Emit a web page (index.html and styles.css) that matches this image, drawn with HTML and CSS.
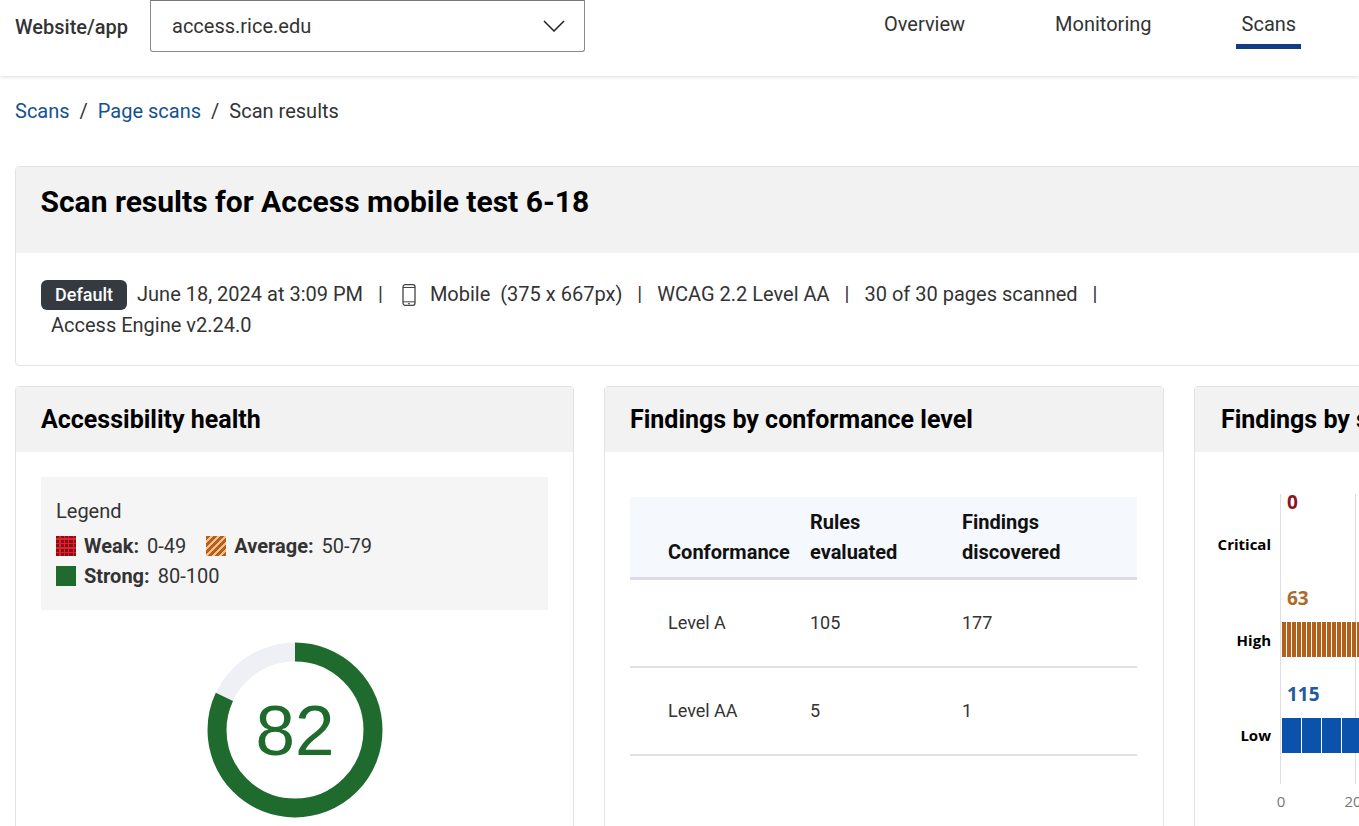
FILE: index.html
```html
<!DOCTYPE html>
<html lang="en">
<head>
<meta charset="utf-8">
<title>Scan results</title>
<link rel="stylesheet" href="styles.css">
</head>
<body>
<header class="topbar">
  <label class="site-label">Website/app</label>
  <div class="select">
    <span>access.rice.edu</span>
    <svg class="chev" width="22" height="12" viewBox="0 0 22 12"><path d="M1 1l10 10L21 1" fill="none" stroke="#222" stroke-width="1.5"/></svg>
  </div>
  <nav class="tabs">
    <a class="tab">Overview</a>
    <a class="tab">Monitoring</a>
    <a class="tab active">Scans</a>
  </nav>
</header>
<main class="page">
  <div class="crumbs"><a>Scans</a><i>/</i><a>Page scans</a><i>/</i><span>Scan results</span></div>
  <section class="summary">
    <h1>Scan results for Access mobile test 6-18</h1>
    <div class="meta">
      <span class="badge">Default</span>
      <span>June 18, 2024 at 3:09 PM</span><i>|</i>
      <svg class="phone" width="14" height="22" viewBox="0 0 14 22"><rect x="1" y="0.7" width="12" height="20.6" rx="2.2" fill="none" stroke="#444" stroke-width="1.3"/><path d="M1 3.5h12M1 17.8h12" stroke="#444" stroke-width="1"/><circle cx="7" cy="19.6" r="0.9" fill="#444"/></svg>
      <span>Mobile&nbsp; (375 x 667px)</span><i>|</i>
      <span>WCAG 2.2 Level AA</span><i>|</i>
      <span>30 of 30 pages scanned</span><i>|</i>
      <span class="engine">Access Engine v2.24.0</span>
    </div>
  </section>
  <div class="cards">
    <section class="card">
      <h2>Accessibility health</h2>
      <div class="card-body">
        <div class="legend">
          <div class="legend-title">Legend</div>
          <div class="legend-row">
            <span class="swatch weak"></span><b>Weak:</b><span class="range">0-49</span>
            <span class="swatch average"></span><b>Average:</b><span class="range">50-79</span>
          </div>
          <div class="legend-row">
            <span class="swatch strong"></span><b>Strong:</b><span class="range">80-100</span>
          </div>
        </div>
        <div class="donut">
          <svg width="176" height="176" viewBox="0 0 176 176">
            <circle cx="88" cy="88" r="78" fill="none" stroke="#eef0f5" stroke-width="19"/>
            <circle cx="88" cy="88" r="78" fill="none" stroke="#1f6b2d" stroke-width="19" pathLength="100" stroke-dasharray="82 18" transform="rotate(-90 88 88)"/>
            <text x="88" y="113" text-anchor="middle" class="score">82</text>
          </svg>
        </div>
      </div>
    </section>
    <section class="card card-wide">
      <h2>Findings by conformance level</h2>
      <div class="card-body">
        <table class="conf">
          <thead><tr><th>Conformance</th><th>Rules<br>evaluated</th><th>Findings<br>discovered</th></tr></thead>
          <tbody>
            <tr><td>Level A</td><td>105</td><td>177</td></tr>
            <tr><td>Level AA</td><td>5</td><td>1</td></tr>
          </tbody>
        </table>
      </div>
    </section>
    <section class="card card-chart">
      <h2>Findings by severity</h2>
      <div class="chart-body">
        <svg class="chart" width="560" height="340" viewBox="0 0 560 340">
          <defs>
            <pattern id="stripes" width="5" height="35" patternUnits="userSpaceOnUse" x="87"><rect width="4" height="35" fill="#b4601a"/></pattern>
            <pattern id="cells" width="20" height="35" patternUnits="userSpaceOnUse" x="87"><rect width="19" height="35" fill="#0b52ad"/></pattern>
          </defs>
          <path d="M85.5 42V332M160.5 42V332" stroke="#dfdfe3"/>
          <rect x="87" y="170" width="270" height="35" fill="url(#stripes)"/>
          <rect x="87" y="266" width="460" height="35" fill="url(#cells)"/>
          <text class="sev" x="76" y="98" text-anchor="end">Critical</text>
          <text class="sev" x="76" y="194" text-anchor="end">High</text>
          <text class="sev" x="76" y="289" text-anchor="end">Low</text>
          <text class="val crit" x="92" y="57">0</text>
          <text class="val high" x="92" y="153">63</text>
          <text class="val low" x="92" y="249">115</text>
          <text class="tick" x="86" y="355" text-anchor="middle">0</text>
          <text class="tick" x="158" y="355" text-anchor="middle">20</text>
        </svg>
      </div>
    </section>
  </div>
</main>
</body>
</html>
```
FILE: styles.css
```css
* { box-sizing: border-box; }
html, body { margin: 0; height: 826px; overflow: hidden; background: #fff; }
body { font-family: Roboto, "Liberation Sans", sans-serif; font-size: 19px; color: #333; width: 1359px; }
.topbar { height: 76px; display: flex; align-items: flex-start; padding-left: 15px; background: #fff; box-shadow: 0 1px 4px rgba(0,0,0,.14); position: relative; }
.site-label { flex: none; font-weight: 500; font-size: 20px; line-height: 24px; margin-top: 15px; width: 135px; }
.select { flex: none; width: 435px; height: 52px; border: 1px solid #8a8a8a; border-top-color: #777; border-radius: 0 0 3px 3px; display: flex; align-items: center; justify-content: space-between; padding: 0 19px 0 21px; font-size: 20px; }
.chev { flex: none; }
.tabs { display: flex; flex: none; margin-left: 299px; }
.tab { font-size: 20px; line-height: 24px; padding: 12px 0 0; height: 49px; margin-right: 90px; white-space: nowrap; }
.tab.active { padding: 12px 5px 0 6px; margin-left: -6px; border-bottom: 5px solid #0f3f80; }
.page { padding: 0 0 0 15px; }
.crumbs { height: 90px; padding-top: 23px; font-size: 20px; line-height: 24px; display: flex; color: #333; }
.crumbs a { color: #14528f; }
.crumbs i { font-style: normal; margin: 0 10px; }
.summary { width: 1400px; height: 200px; border: 1px solid #e3e3e3; border-radius: 4px; }
h1 { margin: 0; height: 86px; background: #f2f2f2; padding: 18px 24.5px 0; font-size: 30px; line-height: 34px; font-weight: 700; color: #000; }
.meta { width: 1100px; padding: 26px 0 0 25px; line-height: 31px; font-size: 20px; display: flex; flex-wrap: wrap; align-items: center; column-gap: 10px; }
.meta i { font-style: normal; margin: 0 5px; }
.meta .engine { margin-left: 10px; }
.badge { background: #343a40; color: #fff; font-weight: 500; font-size: 18px; line-height: 30px; height: 30px; padding: 0 14px; border-radius: 6px; }
.phone { flex: none; margin: 0 4px 0 4px; }
.cards { display: flex; gap: 30px; margin-top: 20px; width: 1800px; }
.card { width: 559px; height: 500px; flex: none; border: 1px solid #e3e3e3; border-radius: 4px; }
.card-wide, .card-chart { width: 560px; }
.card-chart h2 { padding-left: 26px; }
h2 { margin: 0; height: 65px; background: #f2f2f2; padding: 0 25px; font-size: 25px; line-height: 65px; font-weight: 700; color: #000; white-space: nowrap; overflow: hidden; }
.card-body { padding: 25px; }
.legend { height: 133px; background: #f5f5f5; padding: 19px 15px 0; }
.legend-title { line-height: 30px; font-size: 20px; margin-bottom: 5px; }
.legend-row { display: flex; align-items: center; height: 30px; font-size: 20px; }
.legend-row b { font-weight: 700; margin-right: 8px; }
.range { margin-right: 20px; }
.swatch { width: 20px; height: 20px; margin-right: 8px; flex: none; }
.weak { background-color: #8e0d14; background-image: repeating-linear-gradient(0deg, transparent 0 3px, #d9232e 3px 4.5px), repeating-linear-gradient(90deg, transparent 0 3px, #d9232e 3px 4.5px); }
.average { background-color: #f0a868; background-image: repeating-linear-gradient(-45deg, #b4601a 0 3px, #f2c090 3px 5px); }
.strong { background: #1f6b2d; }
.donut { margin-top: 32px; display: flex; justify-content: center; }
.score { font-family: "Liberation Sans", sans-serif; font-size: 71px; fill: #1f6b2d; }
.conf { width: 507px; border-collapse: collapse; table-layout: fixed; margin-top: 20px; font-size: 18px; }
.conf th { background: #f5f8fc; font-size: 20px; font-weight: 700; color: #111; text-align: left; vertical-align: bottom; line-height: 30px; padding: 10px 0; border-bottom: 3px solid #dcdce8; }
.conf td { height: 88px; border-bottom: 2px solid #dfe0e4; padding: 0; }
.conf th:first-child, .conf td:first-child { width: 180px; padding-left: 38px; }
.conf th:nth-child(2), .conf td:nth-child(2) { width: 152px; }
.chart-body { height: 430px; }
.chart { display: block; overflow: visible; }
.sev { font-family: "Open Sans", sans-serif; font-weight: 700; font-size: 15px; fill: #000; }
.val { font-family: "Open Sans", sans-serif; font-weight: 700; font-size: 19px; }
.crit { fill: #8f1420; } .high { fill: #ac6a2c; } .low { fill: #235a9c; }
.tick { font-family: "Open Sans", sans-serif; font-size: 15px; fill: #777; }
```
